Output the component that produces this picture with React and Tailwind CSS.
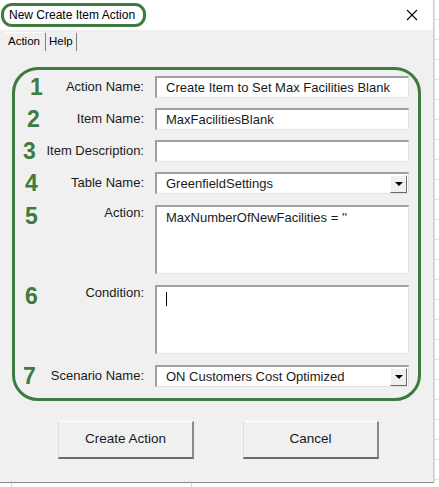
const font = { fontFamily: '"Liberation Sans", Arial, sans-serif' };

const rows = [
  { n: '1', label: 'Action Name:', value: 'Create Item to Set Max Facilities Blank', kind: 'input', mt: 'mt-[6px]', num: 'pl-[15px]' },
  { n: '2', label: 'Item Name:', value: 'MaxFacilitiesBlank', kind: 'input', mt: 'mt-[10px]', num: 'pl-[12px]' },
  { n: '3', label: 'Item Description:', value: '', kind: 'input', mt: 'mt-[10px]', num: 'pl-[8px]' },
  { n: '4', label: 'Table Name:', value: 'GreenfieldSettings', kind: 'select', mt: 'mt-[10px]', num: 'pl-[10px]' },
  { n: '5', label: 'Action:', value: "MaxNumberOfNewFacilities = ''", kind: 'area', mt: 'mt-[11px]', num: 'pl-[10px]' },
  { n: '6', label: 'Condition:', value: '', kind: 'area', caret: true, mt: 'mt-[11px]', num: 'pl-[10px]' },
  { n: '7', label: 'Scenario Name:', value: 'ON Customers Cost Optimized', kind: 'select', mt: 'mt-[11px]', num: 'pl-[8px]' },
];

const Field = ({ row }) => {
  const box = 'w-[254px] bg-white border-t-2 border-l-2 border-t-[#a0a0a0] border-l-[#a0a0a0] border-r border-b border-r-[#e3e3e3] border-b-[#e3e3e3] text-[13px] text-[#1a1a1a]';
  if (row.kind === 'area') {
    return (
      <div className={`${box} h-[69px] pl-[9px] pt-[3px] leading-[16px]`}>
        {row.caret ? <div className="w-px h-[14px] bg-black mt-[2px]" /> : row.value}
      </div>
    );
  }
  return (
    <div className={`${box} h-[22px] pl-[9px] flex items-center justify-between`}>
      <span>{row.value}</span>
      {row.kind === 'select' && (
        <div className="w-[17px] h-[18px] mr-[1px] bg-[#f0f0f0] border-t border-l border-t-white border-l-white border-r border-b border-r-[#696969] border-b-[#696969] flex items-center justify-center">
          <div className="w-0 h-0 border-l-[4px] border-r-[4px] border-t-[4px] border-l-transparent border-r-transparent border-t-black" />
        </div>
      )}
    </div>
  );
};

const Button = ({ children }) => (
  <div className="w-[136px] h-[38px] bg-[#f0f0f0] border-t border-l border-t-white border-l-[#dcdcdc] border-r-2 border-b-2 border-r-[#8a8a8a] border-b-[#6b6b6b] flex items-center justify-center text-[13.5px] text-[#1a1a1a]">
    {children}
  </div>
);

export default function App() {
  return (
    <div className="w-[439px] h-[487px] bg-white flex flex-col overflow-hidden" style={font}>
      <div className="flex h-[483px]">
        <div className="w-[434px] h-[483px] flex flex-col border-b border-b-[#8c8c8c] border-r border-r-[#c8c8c8]">
          {/* title bar */}
          <div className="h-[30px] bg-white flex items-center justify-between pl-[1px] pr-[15px]">
            <div className="h-[24px] border-[3px] border-[#3e7b3e] rounded-[11px] pl-[5px] pr-[8px] flex items-center text-[12px] text-black">
              New Create Item Action
            </div>
            <svg width="12" height="12" viewBox="0 0 12 12" className="text-black">
              <path d="M1 1L11 11M11 1L1 11" stroke="currentColor" strokeWidth="1.1" fill="none" />
            </svg>
          </div>

          <div className="flex-1 bg-[#f0f0f0] flex flex-col">
            {/* tabs */}
            <div className="flex items-end h-[21px] pl-[5px] pt-[2px] text-[11.5px] text-black">
              <div className="h-[19px] px-[3px] flex items-center border-t border-t-white">Action</div>
              <div className="h-[18px] ml-[2px] px-[3px] flex items-center border-l border-r border-l-[#808080] border-r-[#808080]">Help</div>
            </div>

            {/* green annotated box */}
            <div className="mx-[12px] mt-[16px] h-[334px] border-[3px] border-[#3e7b3e] rounded-[26px] flex flex-col">
              {rows.map((row) => (
                <div key={row.n} className={`flex items-start ${row.mt}`}>
                  <div className="w-[129px] flex items-start">
                    <div className={`w-[30px] ${row.num} text-[23px] font-bold text-[#3e7b3e] leading-[22px]`}>
                      {row.n}
                    </div>
                    <div className={`flex-1 text-right text-[13px] text-[#1a1a1a] leading-[22px] whitespace-nowrap ${row.kind === 'area' ? 'mt-[-3px]' : ''}`}>
                      {row.label}
                    </div>
                  </div>
                  <div className="ml-[11px]">
                    <Field row={row} />
                  </div>
                </div>
              ))}
            </div>

            {/* buttons */}
            <div className="flex pl-[58px] gap-[49px] mt-[20px]">
              <Button>Create Action</Button>
              <Button>Cancel</Button>
            </div>
          </div>
        </div>
        {/* sheet grid behind the dialog */}
        <div className="flex-1 flex flex-col border-l border-l-[#e6e6e6]">
          {Array.from({ length: 24 }).map((_, i) => (
            <div key={i} className="h-[20px] border-b border-b-[#e1e1e1]" />
          ))}
        </div>
      </div>
      <div className="flex-1 flex">
        <div className="w-[12px] border-r border-r-[#d4d4d4]" />
        <div className="w-[180px] border-r border-r-[#d4d4d4]" />
      </div>
    </div>
  );
}
